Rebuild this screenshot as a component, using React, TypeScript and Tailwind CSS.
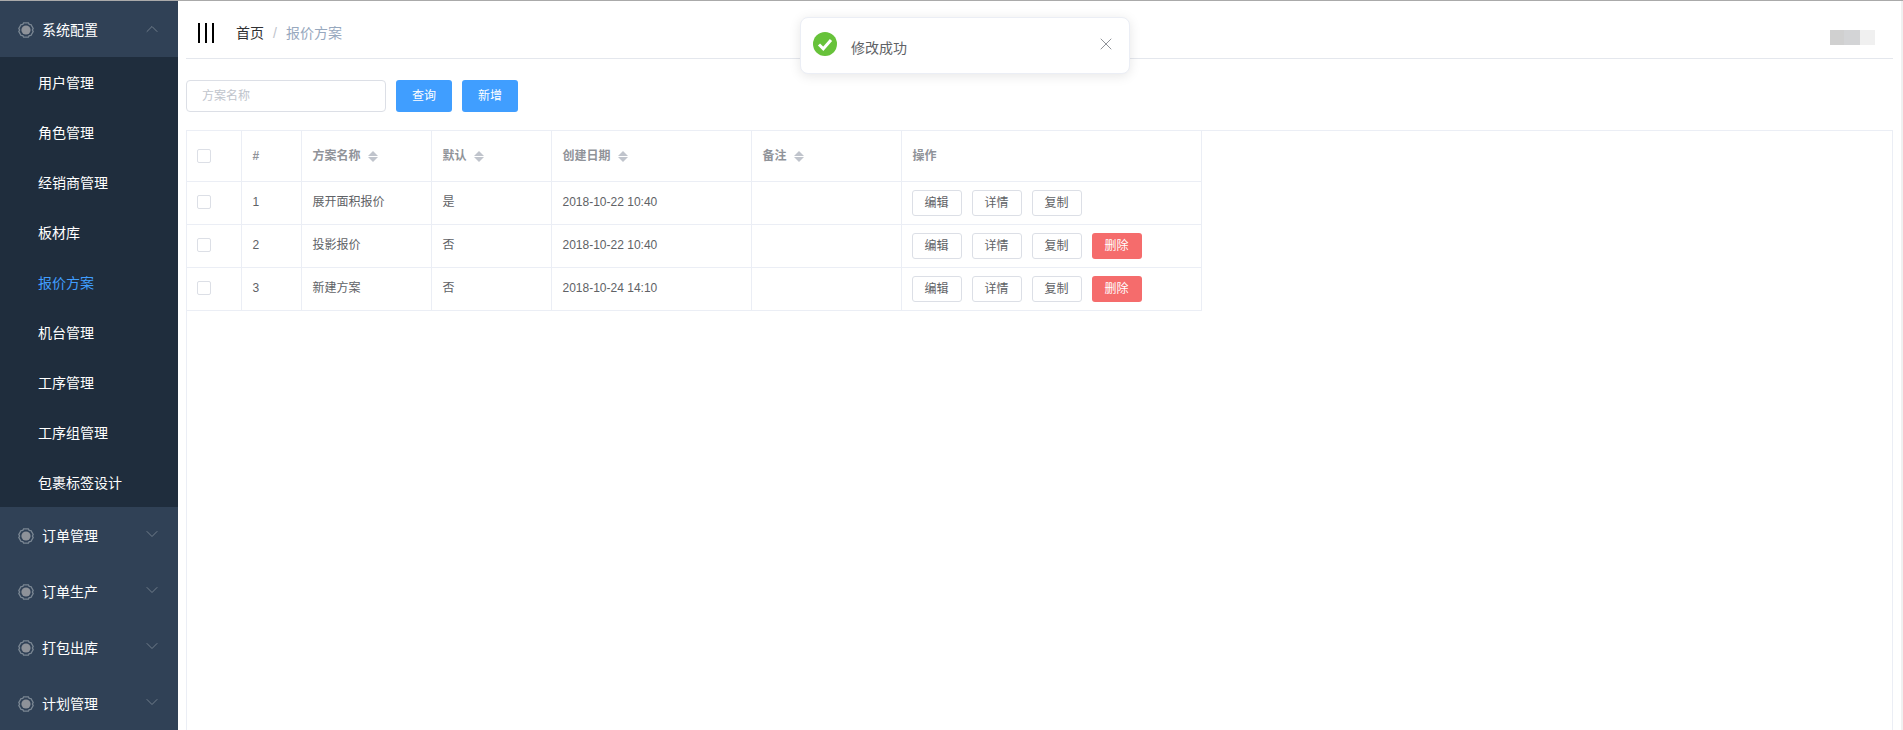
import { ChevronDown, ChevronUp, X } from "lucide-react";

const subMenus = ["用户管理", "角色管理", "经销商管理", "板材库", "报价方案", "机台管理", "工序管理", "工序组管理", "包裹标签设计"];
const bottomMenus = ["订单管理", "订单生产", "打包出库", "计划管理"];

const rows = [
  { id: "1", name: "展开面积报价", def: "是", date: "2018-10-22 10:40", canDelete: false },
  { id: "2", name: "投影报价", def: "否", date: "2018-10-22 10:40", canDelete: true },
  { id: "3", name: "新建方案", def: "否", date: "2018-10-24 14:10", canDelete: true },
];

function GearIcon() {
  return (
    <svg width="16" height="16" viewBox="0 0 16 16" className="mt-[2px] shrink-0">
      <path
        d="M5.6 0.9 L10.4 0.9 L11.2 2.4 L13 2.6 L15.2 6.4 L14.4 8 L15.2 9.6 L13 13.4 L11.2 13.6 L10.4 15.1 L5.6 15.1 L4.8 13.6 L3 13.4 L0.8 9.6 L1.6 8 L0.8 6.4 L3 2.6 L4.8 2.4 Z"
        fill="none"
        stroke="#7a8693"
        strokeWidth="1.3"
      />
      <circle cx="8" cy="8" r="4.6" fill="#8e9299" />
    </svg>
  );
}

function MenuTitle({ label, open }: { label: string; open?: boolean }) {
  return (
    <div className="flex h-14 items-center bg-[#304156] pl-[18px] pr-[16px] text-sm text-white">
      <GearIcon />
      <span className="ml-[8px] flex-1 pt-[1px]">{label}</span>
      {open ? (
        <ChevronUp size={20} strokeWidth={1.1} className="text-[#76828f]" />
      ) : (
        <ChevronDown size={20} strokeWidth={1.1} className="mb-[2px] text-[#76828f]" />
      )}
    </div>
  );
}

function SortCaret() {
  return (
    <span className="ml-[7px] inline-flex flex-col gap-[1px] align-middle">
      <span className="h-0 w-0 border-x-[5px] border-b-[5px] border-x-transparent border-b-[#c0c4cc]" />
      <span className="h-0 w-0 border-x-[5px] border-t-[5px] border-x-transparent border-t-[#c0c4cc]" />
    </span>
  );
}

function Checkbox() {
  return <span className="block h-[14px] w-[14px] rounded-[2px] border border-[#dcdfe6] bg-white" />;
}

function RowButton({ label, danger }: { label: string; danger?: boolean }) {
  return (
    <button
      className={
        danger
          ? "h-[26px] w-[50px] rounded-[3px] bg-[#f56c6c] text-xs text-white"
          : "h-[26px] w-[50px] rounded-[3px] border border-[#dcdfe6] bg-white text-xs text-[#606266]"
      }
    >
      {label}
    </button>
  );
}

export default function App() {
  const th = "border-r border-[#ebeef5] pl-[11px] pr-[10px] text-left font-bold text-[#909399]";
  const td = "border-r border-[#ebeef5] pl-[11px] pr-[10px] pb-[2px] text-[#606266]";

  return (
    <div className="relative flex h-[730px] flex-col overflow-hidden bg-white font-['Liberation_Sans','Noto_Sans_CJK_SC',sans-serif]">
      <div className="h-px shrink-0 bg-[#aaaaaa]" />
      <div className="flex min-h-0 flex-1">
        {/* Sidebar */}
        <aside className="w-[178px] shrink-0 overflow-hidden bg-[#304156]">
          <MenuTitle label="系统配置" open />
          <div className="bg-[#1f2d3d]">
            {subMenus.map((m) => (
              <div
                key={m}
                className={
                  m === "报价方案"
                    ? "flex h-[50px] items-center pl-[38px] pt-[1px] text-sm text-[#409eff]"
                    : "flex h-[50px] items-center pl-[38px] pt-[1px] text-sm text-white"
                }
              >
                {m}
              </div>
            ))}
          </div>
          {bottomMenus.map((m) => (
            <MenuTitle key={m} label={m} />
          ))}
        </aside>

        {/* Main */}
        <main className="flex min-w-0 flex-1 flex-col pl-[8px] pr-[8px]">
          <header className="flex h-[58px] shrink-0 items-center border-b border-[#e4e7ed] pt-[6px]">
            <svg width="16" height="20" viewBox="0 0 16 20" className="ml-[12px]">
              <rect x="0" y="0" width="2" height="20" fill="#000" />
              <rect x="7" y="0" width="2" height="20" fill="#000" />
              <rect x="14" y="0" width="2" height="20" fill="#000" />
            </svg>
            <nav className="ml-[22px] flex items-center text-sm">
              <span className="text-[#303133]">首页</span>
              <span className="mx-[9px] text-[#c0c4cc]">/</span>
              <span className="text-[#97a8be]">报价方案</span>
            </nav>
            <div className="ml-auto mr-[18px] mt-[10px] flex h-[15px]">
              <div className="w-[14px] bg-[#d0d0d0]" />
              <div className="w-[16px] bg-[#d3d4d6]" />
              <div className="w-[15px] bg-[#f0f0f0]" />
            </div>
          </header>

          <div className="mt-[21px] flex items-center">
            <div className="flex h-[32px] w-[200px] items-center rounded-[4px] border border-[#dcdfe6] pl-[15px] text-xs text-[#c0c4cc]">
              方案名称
            </div>
            <button className="ml-[10px] h-[32px] w-[56px] rounded-[3px] bg-[#409eff] text-xs text-white">查询</button>
            <button className="ml-[10px] h-[32px] w-[56px] rounded-[3px] bg-[#409eff] text-xs text-white">新增</button>
          </div>

          <div className="mt-[18px] flex-1 border-l border-r border-t border-[#ebeef5]">
            <table className="w-[1014px] table-fixed border-collapse text-xs">
              <colgroup>
                <col className="w-[54px]" />
                <col className="w-[60px]" />
                <col className="w-[130px]" />
                <col className="w-[120px]" />
                <col className="w-[200px]" />
                <col className="w-[150px]" />
                <col className="w-[300px]" />
              </colgroup>
              <thead>
                <tr className="h-[50px] border-b border-[#ebeef5]">
                  <th className="border-r border-[#ebeef5] px-[10px]">
                    <Checkbox />
                  </th>
                  <th className={th}>#</th>
                  <th className={th}>
                    方案名称
                    <SortCaret />
                  </th>
                  <th className={th}>
                    默认
                    <SortCaret />
                  </th>
                  <th className={th}>
                    创建日期
                    <SortCaret />
                  </th>
                  <th className={th}>
                    备注
                    <SortCaret />
                  </th>
                  <th className={th}>操作</th>
                </tr>
              </thead>
              <tbody>
                {rows.map((r) => (
                  <tr key={r.id} className="h-[43px] border-b border-[#ebeef5]">
                    <td className="border-r border-[#ebeef5] px-[10px] pb-[2px]">
                      <Checkbox />
                    </td>
                    <td className={td}>{r.id}</td>
                    <td className={td}>{r.name}</td>
                    <td className={td}>{r.def}</td>
                    <td className={td}>{r.date}</td>
                    <td className={td} />
                    <td className="border-r border-[#ebeef5] px-[10px] text-[#606266]">
                      <div className="flex gap-[10px]">
                        <RowButton label="编辑" />
                        <RowButton label="详情" />
                        <RowButton label="复制" />
                        {r.canDelete && <RowButton label="删除" danger />}
                      </div>
                    </td>
                  </tr>
                ))}
              </tbody>
            </table>
          </div>
        </main>

        {/* page scrollbar track */}
        <div className="w-[2px] shrink-0 bg-[#f0f0f0]" />
      </div>

      {/* Toast */}
      <div className="absolute left-[800px] top-[17px] flex h-[57px] w-[330px] rounded-lg border border-[#ebeef5] bg-white shadow-[0_2px_12px_0_rgba(0,0,0,0.1)]">
        <svg width="24" height="24" viewBox="0 0 24 24" className="ml-[12px] mt-[14px]">
          <circle cx="12" cy="12" r="12" fill="#67c23a" />
          <path d="M6 12.5 L10.3 16.8 L18 8" fill="none" stroke="#fff" strokeWidth="3" />
        </svg>
        <span className="ml-[14px] mt-[20px] text-sm leading-[20px] text-[#606266]">修改成功</span>
        <X size={20} strokeWidth={1.2} className="ml-auto mr-[13px] mt-[16px] text-[#909399]" />
      </div>
    </div>
  );
}
